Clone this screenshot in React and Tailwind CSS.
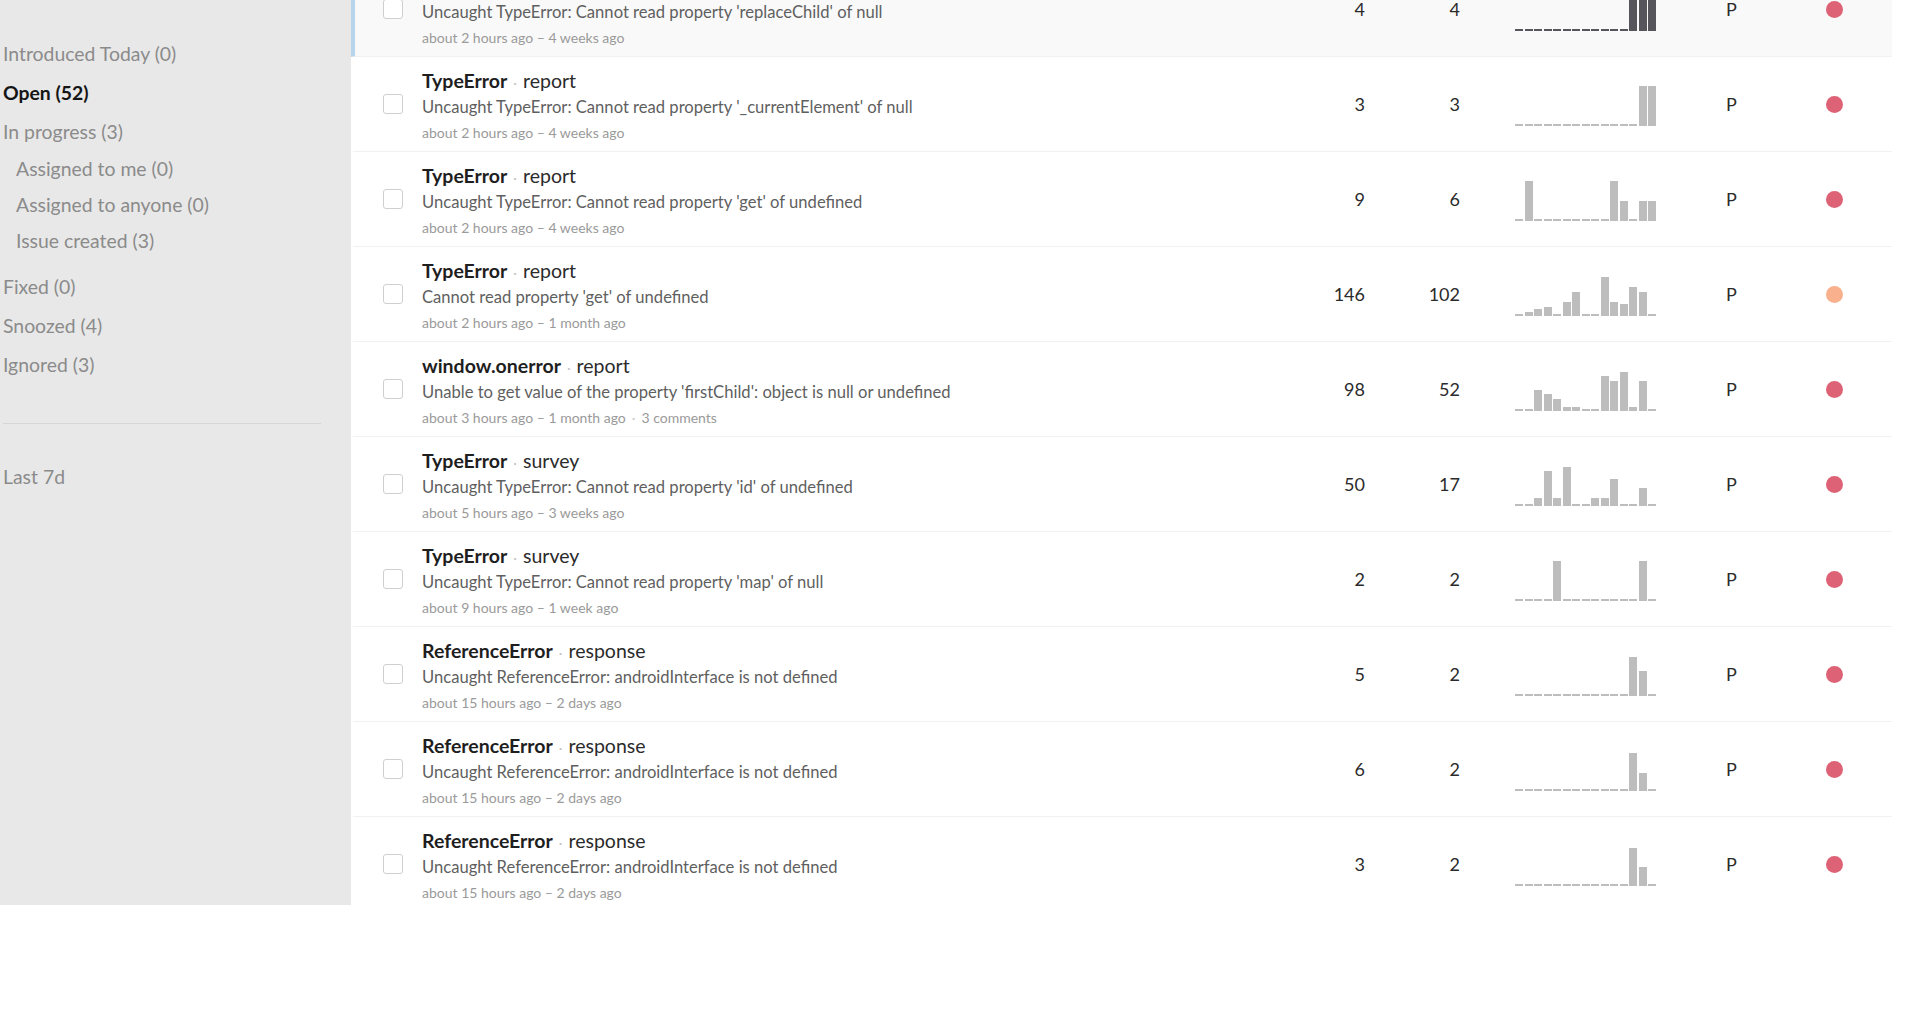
import React from 'react';

const sideItems = [
    { label: 'Introduced Today (0)' },
    { label: 'Open (52)', active: true },
    { label: 'In progress (3)' },
];

const subItems = ['Assigned to me (0)', 'Assigned to anyone (0)', 'Issue created (3)'];

const tailItems = ['Fixed (0)', 'Snoozed (4)', 'Ignored (3)'];

const F = 40;
const z = 2;

const errors = [
    {
        type: 'TypeError',
        source: 'report',
        message: "Uncaught TypeError: Cannot read property 'replaceChild' of null",
        meta: 'about 2 hours ago – 4 weeks ago',
        events: 4,
        users: 4,
        bars: [z, z, z, z, z, z, z, z, z, z, z, z, F, F, F],
        color: 'red',
        hovered: true,
    },
    {
        type: 'TypeError',
        source: 'report',
        message: "Uncaught TypeError: Cannot read property '_currentElement' of null",
        meta: 'about 2 hours ago – 4 weeks ago',
        events: 3,
        users: 3,
        bars: [z, z, z, z, z, z, z, z, z, z, z, z, z, F, F],
        color: 'red',
    },
    {
        type: 'TypeError',
        source: 'report',
        message: "Uncaught TypeError: Cannot read property 'get' of undefined",
        meta: 'about 2 hours ago – 4 weeks ago',
        events: 9,
        users: 6,
        bars: [z, F, z, z, z, z, z, z, z, z, F, 20, z, 20, 20],
        color: 'red',
    },
    {
        type: 'TypeError',
        source: 'report',
        message: "Cannot read property 'get' of undefined",
        meta: 'about 2 hours ago – 1 month ago',
        events: 146,
        users: 102,
        bars: [z, 4, 7, 9, z, 14, 24, z, z, 39, 14, 12, 29, 24, z],
        color: 'orange',
    },
    {
        type: 'window.onerror',
        source: 'report',
        message: "Unable to get value of the property 'firstChild': object is null or undefined",
        meta: 'about 3 hours ago – 1 month ago',
        comments: '3 comments',
        events: 98,
        users: 52,
        bars: [z, z, 21, 17, 12, 4, 4, z, z, 35, 30, 39, 4, 30, z],
        color: 'red',
    },
    {
        type: 'TypeError',
        source: 'survey',
        message: "Uncaught TypeError: Cannot read property 'id' of undefined",
        meta: 'about 5 hours ago – 3 weeks ago',
        events: 50,
        users: 17,
        bars: [z, z, 8, 35, 8, 39, z, z, 8, 8, 27, z, z, 18, z],
        color: 'red',
    },
    {
        type: 'TypeError',
        source: 'survey',
        message: "Uncaught TypeError: Cannot read property 'map' of null",
        meta: 'about 9 hours ago – 1 week ago',
        events: 2,
        users: 2,
        bars: [z, z, z, z, F, z, z, z, z, z, z, z, z, F, z],
        color: 'red',
    },
    {
        type: 'ReferenceError',
        source: 'response',
        message: 'Uncaught ReferenceError: androidInterface is not defined',
        meta: 'about 15 hours ago – 2 days ago',
        events: 5,
        users: 2,
        bars: [z, z, z, z, z, z, z, z, z, z, z, z, 39, 25, z],
        color: 'red',
    },
    {
        type: 'ReferenceError',
        source: 'response',
        message: 'Uncaught ReferenceError: androidInterface is not defined',
        meta: 'about 15 hours ago – 2 days ago',
        events: 6,
        users: 2,
        bars: [z, z, z, z, z, z, z, z, z, z, z, z, 38, 18, z],
        color: 'red',
    },
    {
        type: 'ReferenceError',
        source: 'response',
        message: 'Uncaught ReferenceError: androidInterface is not defined',
        meta: 'about 15 hours ago – 2 days ago',
        events: 3,
        users: 2,
        bars: [z, z, z, z, z, z, z, z, z, z, z, z, 38, 19, z],
        color: 'red',
    },
];

function Sparkline({ bars, dark }) {
    return (
        <div className="flex items-end gap-[1.5px] h-[40px] w-[141px] mt-[3px]">
            {bars.map((h, i) => (
                <div
                    key={i}
                    className={dark ? 'w-[8px] bg-[#55555b]' : 'w-[8px] bg-[#bdbdbd]'}
                    style={{ height: h }}
                />
            ))}
        </div>
    );
}

function ErrorRow({ item }) {
    return (
        <div
            className={`flex items-center h-[95px] border-b border-[#f1f1f1] border-l-[4px] ${
                item.hovered ? 'border-l-[#b8d5ec] bg-[#f9f9f9]' : 'border-l-transparent bg-white'
            }`}
        >
            <div className="pl-[28px] pr-[19px] flex items-center">
                <div className="w-[20px] h-[20px] rounded-[3px] border border-[#cfcfcf] bg-white" />
            </div>
            <div className="flex-1 min-w-0 pt-[11px] self-start">
                <div className="h-[26px] leading-[26px] text-[19.5px] whitespace-nowrap">
                    <span className="font-bold text-[#1e1e1e]">{item.type}</span>
                    <span className="mx-[6px] text-[#c4c4c4] text-[14px]">·</span>
                    <span className="text-[#2b2b2b]">{item.source}</span>
                </div>
                <div className="h-[26px] leading-[26px] text-[16.6px] text-[#5f5f5f] whitespace-nowrap">{item.message}</div>
                <div className="h-[26px] leading-[26px] text-[14px] text-[#9a9a9a] whitespace-nowrap">
                    {item.meta}
                    {item.comments ? (
                        <>
                            <span className="mx-[6px] text-[#cccccc]">·</span>
                            {item.comments}
                        </>
                    ) : null}
                </div>
            </div>
            <div className="w-[80px] text-right text-[18px] text-[#2b2b2b]">{item.events}</div>
            <div className="w-[95px] text-right text-[18px] text-[#2b2b2b]">{item.users}</div>
            <div className="ml-[55px]">
                <Sparkline bars={item.bars} dark={item.hovered} />
            </div>
            <div className="ml-[70px] w-[20px] text-[18px] text-[#2b2b2b]">P</div>
            <div className="ml-[80px] mr-[49px] flex items-center">
                <div
                    className={`w-[17px] h-[17px] rounded-full ${
                        item.color === 'orange' ? 'bg-[#f9b08c]' : 'bg-[#dd6276]'
                    }`}
                />
            </div>
        </div>
    );
}

export default function App() {
    return (
        <div className="min-h-screen bg-white font-['Lato','Open_Sans',sans-serif]">
            <div className="flex h-[905px] overflow-hidden">
                <aside className="w-[351px] shrink-0 bg-[#e8e8e8] pl-[3px] pt-[34px] text-[19.4px]">
                    {sideItems.map((it) => (
                        <div
                            key={it.label}
                            className={`h-[39px] leading-[39px] ${
                                it.active ? 'font-bold text-[#151515]' : 'text-[#8b8b8b]'
                            }`}
                        >
                            {it.label}
                        </div>
                    ))}
                    <div className="pl-[13px]">
                        {subItems.map((label) => (
                            <div key={label} className="h-[36px] leading-[36px] text-[#8b8b8b]">
                                {label}
                            </div>
                        ))}
                    </div>
                    <div className="mt-[8px]">
                        {tailItems.map((label) => (
                            <div key={label} className="h-[39px] leading-[39px] text-[#8b8b8b]">
                                {label}
                            </div>
                        ))}
                    </div>
                    <div className="mt-[39px] mr-[30px] border-t border-[#d6d6d6]" />
                    <div className="mt-[33px] h-[39px] leading-[39px] text-[#8b8b8b]">Last 7d</div>
                </aside>
                <main className="w-[1541px] shrink-0">
                    <div className="mt-[-38px]">
                        {errors.map((item, i) => (
                            <ErrorRow key={i} item={item} />
                        ))}
                    </div>
                </main>
            </div>
        </div>
    );
}
